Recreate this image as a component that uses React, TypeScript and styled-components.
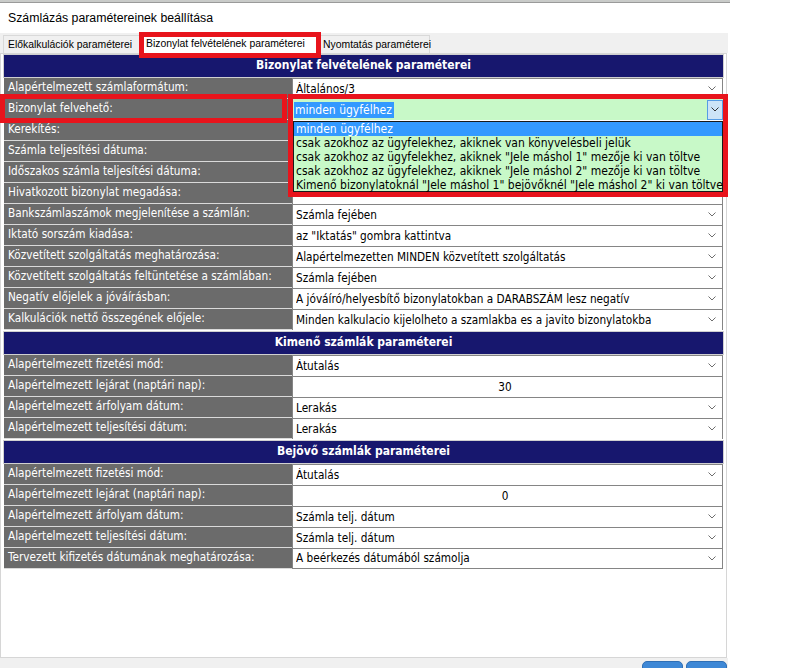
import React from "react";
import styled, { createGlobalStyle, css } from "styled-components";

const GlobalStyle = createGlobalStyle`
  html, body {
    margin: 0;
    padding: 0;
    background: #fff;
    height: 668px;
    overflow: hidden;
  }
  body {
    font-family: "DejaVu Sans Condensed", "DejaVu Sans", sans-serif;
    font-stretch: condensed;
    font-size: 11.7px;
    color: #000;
  }
`;

const RED = "#e8141c";

const Window = styled.div`
  width: 730px;
  display: flex;
  flex-direction: column;
`;

const TopEdge = styled.div`
  height: 2px;
  background: #c9cbc9;
  border-bottom: 1px solid #9a9a9a;
`;

const TitleBar = styled.div`
  height: 30px;
  padding-left: 8px;
  display: flex;
  align-items: center;
  font-family: "Liberation Sans", Arial, sans-serif;
  font-stretch: normal;
  font-size: 12.3px;
  background: #fff;
`;

const TabStrip = styled.div`
  height: 20px;
  width: 728px;
  background: #f0f0f0;
  display: flex;
  align-items: flex-end;
  padding-left: 3px;
  box-sizing: border-box;
  font-family: "Liberation Sans", Arial, sans-serif;
  font-stretch: normal;
  font-size: 10.4px;
`;

const Tab = styled.div<{ $active?: boolean; $w: number }>`
  position: relative;
  width: ${(p) => p.$w}px;
  box-sizing: border-box;
  height: 18px;
  border: 1px solid #d9d9d9;
  border-bottom: none;
  background: #f0f0f0;
  padding: 3px 0 0 4px;
  white-space: nowrap;
  ${(p) =>
    p.$active &&
    css`
      height: 21px;
      margin: 0 -1px -1px -1px;
      background: #fff;
      z-index: 2;
      padding-top: 4px;
      &::after {
        content: "";
        position: absolute;
        left: -3px;
        top: -2px;
        width: 182px;
        height: 26px;
        border: 5px solid ${RED};
        box-sizing: border-box;
      }
    `}
`;

const Panel = styled.div`
  width: 727px;
  height: 605px;
  box-sizing: border-box;
  background: #fff;
  border: 1px solid #d6d6d6;
  padding: 0 3px;
`;

const Table = styled.div`
  display: flex;
  flex-direction: column;
  margin-top: -1px;
`;

const Header = styled.div`
  height: 22px;
  margin: 2px 0 1px;
  background: #17176e;
  color: #fff;
  font-weight: bold;
  font-size: 12px;
  line-height: 20px;
  text-align: center;
  box-shadow: 0 0 0 1px #d0d0d0;
`;

const Row = styled.div`
  display: grid;
  grid-template-columns: 288px 1fr;
  height: 21px;
  &:last-child > div:last-child {
    border-bottom: 1px solid #858585;
  }
`;

const Label = styled.div<{ $marked?: boolean }>`
  position: relative;
  background: #6b6b6b;
  color: #fff;
  box-sizing: border-box;
  border-bottom: 1px solid #dadada;
  padding: 1px 0 0 4px;
  line-height: 17px;
  white-space: nowrap;
  ${(p) =>
    p.$marked &&
    css`
      &::after {
        content: "";
        position: absolute;
        left: -4px;
        top: -5px;
        width: 287px;
        height: 29px;
        border: 5px solid ${RED};
        box-sizing: border-box;
        z-index: 5;
      }
    `}
`;

const Value = styled.div<{ $center?: boolean }>`
  position: relative;
  display: flex;
  align-items: center;
  box-sizing: border-box;
  border: 1px solid #858585;
  border-bottom: none;
  background: #fff;
  padding: 0 6px 1px 3px;
  white-space: nowrap;
  justify-content: ${(p) => (p.$center ? "center" : "flex-start")};
`;

const ValueText = styled.span`
  flex: 1;
  overflow: hidden;
`;

const CenterText = styled.span`
  padding-right: 2px;
`;

const Chevron = ({ color = "#6e6e6e" }: { color?: string }) => (
  <svg width="8" height="5" viewBox="0 0 8 5">
    <polyline points="0.5,0.5 4,4 7.5,0.5" fill="none" stroke={color} strokeWidth="1" />
  </svg>
);

const Dropdown = styled.div`
  position: absolute;
  left: -5px;
  top: -6px;
  width: 440px;
  height: 103px;
  box-sizing: border-box;
  border: 5px solid ${RED};
  z-index: 10;
  display: flex;
  flex-direction: column;
  gap: 1px;
  background: #fff;
`;

const Combo = styled.div`
  height: 21px;
  display: flex;
  align-items: center;
  background: #c8f9c8;
`;

const ComboText = styled.div`
  flex: 1;
  padding-left: 1px;
  font-size: 12px;
`;

const Selected = styled.span`
  background: #3399ff;
  color: #fff;
  padding: 1px 2px 1px 1px;
`;

const ComboButton = styled.div`
  width: 16px;
  height: 20px;
  box-sizing: border-box;
  background: #cce4f7;
  border: 1px solid #569de5;
  display: flex;
  align-items: center;
  justify-content: center;
`;

const List = styled.div`
  height: 71px;
  box-sizing: border-box;
  border: 1px solid #1a1a1a;
  background: #c8f9c8;
  display: flex;
  flex-direction: column;
`;

const Item = styled.div<{ $active?: boolean }>`
  height: 14px;
  line-height: 14px;
  padding-left: 2px;
  font-size: 12px;
  white-space: nowrap;
  ${(p) =>
    p.$active &&
    css`
      background: #3399ff;
      color: #fff;
    `}
`;

const Footer = styled.div`
  width: 728px;
  height: 20px;
  background: #f0f0f0;
  display: flex;
  justify-content: flex-end;
  gap: 3px;
  padding: 3px 1px 0 0;
  box-sizing: border-box;
`;

const FooterButton = styled.div`
  width: 41px;
  height: 24px;
  border-radius: 5px;
  background: #3e88d6;
  border: 1px solid #2f6fb5;
  box-sizing: border-box;
`;

type Param = {
  label: string;
  value: string;
  kind?: "select" | "number" | "open";
};

const options = [
  "minden ügyfélhez",
  "csak azokhoz az ügyfelekhez, akiknek van könyvelésbeli jelük",
  'csak azokhoz az ügyfelekhez, akiknek "Jele máshol 1" mezője ki van töltve',
  'csak azokhoz az ügyfelekhez, akiknek "Jele máshol 2" mezője ki van töltve',
  'Kimenő bizonylatoknál "Jele máshol 1" bejövőknél "Jele máshol 2" ki van töltve',
];

// the values of the rows under the open list are covered by it
const sections: { title: string; rows: Param[] }[] = [
  {
    title: "Bizonylat felvételének paraméterei",
    rows: [
      { label: "Alapértelmezett számlaformátum:", value: "Általános/3" },
      { label: "Bizonylat felvehető:", value: "minden ügyfélhez", kind: "open" },
      { label: "Kerekítés:", value: "" },
      { label: "Számla teljesítési dátuma:", value: "" },
      { label: "Időszakos számla teljesítési dátuma:", value: "" },
      { label: "Hivatkozott bizonylat megadása:", value: "" },
      { label: "Bankszámlaszámok megjelenítése a számlán:", value: "Számla fejében" },
      { label: "Iktató sorszám kiadása:", value: 'az "Iktatás" gombra kattintva' },
      { label: "Közvetített szolgáltatás meghatározása:", value: "Alapértelmezetten MINDEN közvetített szolgáltatás" },
      { label: "Közvetített szolgáltatás feltüntetése a számlában:", value: "Számla fejében" },
      { label: "Negatív előjelek a jóváírásban:", value: "A jóváíró/helyesbítő bizonylatokban a DARABSZÁM lesz negatív" },
      { label: "Kalkulációk nettő összegének előjele:", value: "Minden kalkulacio kijelolheto a szamlakba es a javito bizonylatokba" },
    ],
  },
  {
    title: "Kimenő számlák paraméterei",
    rows: [
      { label: "Alapértelmezett fizetési mód:", value: "Átutalás" },
      { label: "Alapértelmezett lejárat (naptári nap):", value: "30", kind: "number" },
      { label: "Alapértelmezett árfolyam dátum:", value: "Lerakás" },
      { label: "Alapértelmezett teljesítési dátum:", value: "Lerakás" },
    ],
  },
  {
    title: "Bejövő számlák paraméterei",
    rows: [
      { label: "Alapértelmezett fizetési mód:", value: "Átutalás" },
      { label: "Alapértelmezett lejárat (naptári nap):", value: "0", kind: "number" },
      { label: "Alapértelmezett árfolyam dátum:", value: "Számla telj. dátum" },
      { label: "Alapértelmezett teljesítési dátum:", value: "Számla telj. dátum" },
      { label: "Tervezett kifizetés dátumának meghatározása:", value: "A beérkezés dátumából számolja" },
    ],
  },
];

const ParamRow: React.FC<{ row: Param }> = ({ row }) => {
  if (row.kind === "number") {
    return (
      <Row>
        <Label>{row.label}</Label>
        <Value $center>
          <CenterText>{row.value}</CenterText>
        </Value>
      </Row>
    );
  }
  return (
    <Row>
      <Label $marked={row.kind === "open"}>{row.label}</Label>
      <Value>
        <ValueText>{row.value}</ValueText>
        <Chevron />
        {row.kind === "open" && (
          <Dropdown>
            <Combo>
              <ComboText>
                <Selected>{row.value}</Selected>
              </ComboText>
              <ComboButton>
                <Chevron color="#333" />
              </ComboButton>
            </Combo>
            <List>
              {options.map((o, i) => (
                <Item key={o} $active={i === 0}>
                  {o}
                </Item>
              ))}
            </List>
          </Dropdown>
        )}
      </Value>
    </Row>
  );
};

const App: React.FC = () => {
  return (
    <>
      <GlobalStyle />
      <Window>
        <TopEdge />
        <TitleBar>Számlázás paramétereinek beállítása</TitleBar>
        <TabStrip>
          <Tab $w={139}>Előkalkulációk paraméterei</Tab>
          <Tab $w={178} $active>
            Bizonylat felvételének paraméterei
          </Tab>
          <Tab $w={112}>Nyomtatás paraméterei</Tab>
        </TabStrip>
        <Panel>
          <Table>
            {sections.map((s) => (
              <React.Fragment key={s.title}>
                <Header>{s.title}</Header>
                {s.rows.map((r, i) => (
                  <ParamRow key={s.title + i} row={r} />
                ))}
              </React.Fragment>
            ))}
          </Table>
        </Panel>
        <Footer>
          <FooterButton />
          <FooterButton />
        </Footer>
      </Window>
    </>
  );
};

export default App;
